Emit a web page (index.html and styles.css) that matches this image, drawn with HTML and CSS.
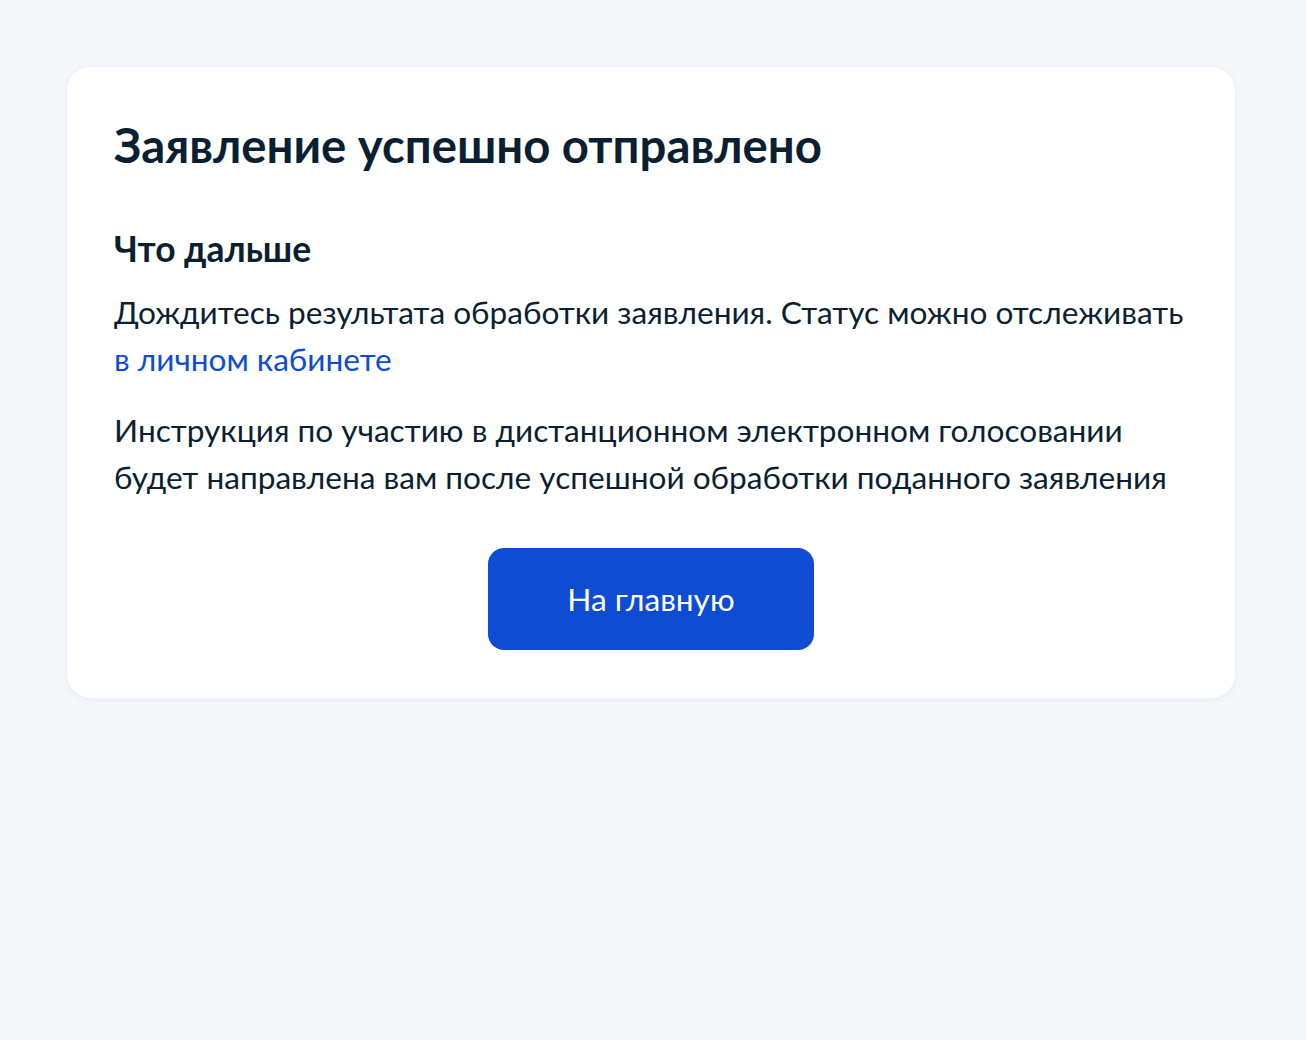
FILE: index.html
```html
<!DOCTYPE html>
<html lang="ru">
<head>
<meta charset="utf-8">
<title>Заявление успешно отправлено</title>
<link rel="stylesheet" href="styles.css">
</head>
<body>
<main class="page">
  <section class="card">
    <h1 class="title">Заявление успешно отправлено</h1>
    <h2 class="subtitle">Что дальше</h2>
    <p class="text">Дождитесь результата обработки заявления. Статус можно отслеживать <a class="link" href="#">в личном кабинете</a></p>
    <p class="text">Инструкция по участию в дистанционном электронном голосовании будет направлена вам после успешной обработки поданного заявления</p>
    <div class="actions">
      <a class="button" href="#">На главную</a>
    </div>
  </section>
</main>
</body>
</html>
```
FILE: styles.css
```css
html, body {
  margin: 0;
  padding: 0;
}
body {
  background: #f5f7fb;
  font-family: Lato, "Noto Sans", sans-serif;
  color: #0b1f33;
  min-height: 1040px;
}
.page {
  padding: 67px 71px 67px 67px;
}
.card {
  background: #ffffff;
  border-radius: 24px;
  box-shadow: 0 1px 6px rgba(225, 231, 245, 0.9);
  padding: 50px 47px 48px 47px;
}
.title {
  margin: 0;
  font-size: 47.3px;
  line-height: 56px;
  font-weight: 700;
}
.subtitle {
  margin: 56px 0 0 0;
  font-size: 35.4px;
  line-height: 40px;
  font-weight: 700;
}
.text {
  margin: 20px 0 0 0;
  font-size: 31.6px;
  line-height: 47px;
  font-weight: 400;
}
.text + .text {
  margin-top: 24px;
}
.link {
  color: #0d4cd3;
  text-decoration: none;
  white-space: nowrap;
}
.actions {
  display: flex;
  justify-content: center;
  margin-top: 47px;
}
.button {
  display: flex;
  align-items: center;
  justify-content: center;
  width: 326px;
  height: 102px;
  border-radius: 16px;
  background: #0d4cd3;
  color: #ffffff;
  font-size: 31.6px;
  text-decoration: none;
}
```
